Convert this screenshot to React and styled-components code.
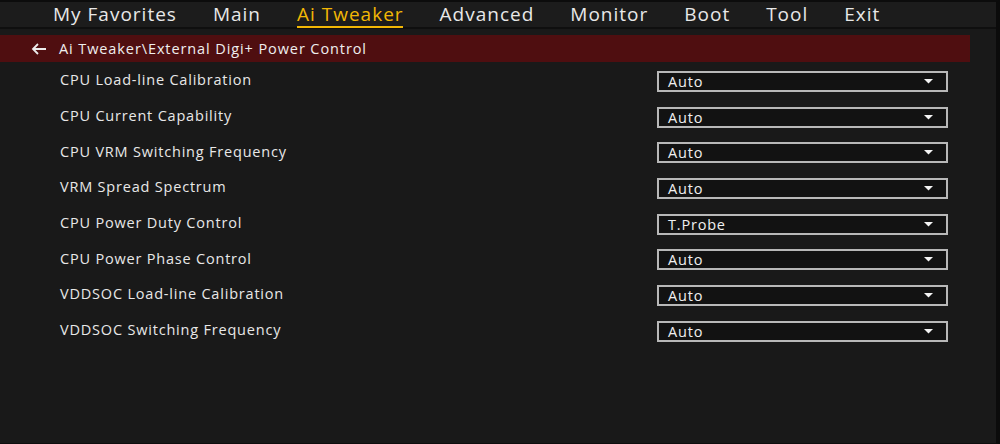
import React from 'react';
import styled, { createGlobalStyle } from 'styled-components';

const GlobalStyle = createGlobalStyle`
  html, body {
    margin: 0;
    padding: 0;
    background: #191919;
  }
  body {
    font-family: "Open Sans", "Noto Sans", "Liberation Sans", sans-serif;
  }
`;

// 画面全体
const Screen = styled.div`
  width: 1000px;
  height: 444px;
  box-sizing: border-box;
  background: #191919;
  border-top: 2px solid #0c0c0c;
  border-right: 4px solid #0b0b0b;
  border-bottom: 1px solid #0e0e0e;
  display: flex;
  flex-direction: column;
  overflow: hidden;
`;

// 上部のメニュー
const NavBar = styled.nav`
  height: 25px;
  flex-shrink: 0;
  display: flex;
  align-items: center;
  gap: 36px;
  padding-left: 53px;
  background: #1c1c1c;
  border-bottom: 2px solid #0f0f0f;
`;

const NavItem = styled.span`
  position: relative;
  font-size: 19px;
  line-height: 25px;
  color: ${(p) => (p.$active ? '#f2b705' : '#e8e8e8')};
  letter-spacing: 1px;

  &::after {
    content: '';
    display: ${(p) => (p.$active ? 'block' : 'none')};
    position: absolute;
    left: 0;
    right: 1px;
    bottom: -1px;
    height: 2px;
    background: #f2b705;
  }
`;

const Breadcrumb = styled.div`
  height: 27px;
  margin: 6px 26px 0 0;
  flex-shrink: 0;
  display: flex;
  align-items: center;
  gap: 12px;
  padding-left: 31px;
  background: #4f0e10;
  color: #efefef;
  font-size: 14.5px;
  letter-spacing: 0.9px;
`;

const BackArrow = styled.svg`
  width: 16px;
  height: 12px;
  flex-shrink: 0;
`;

const List = styled.div`
  display: flex;
  flex-direction: column;
  padding-top: 1px;
`;

// 設定項目の1行
const Row = styled.div`
  height: 35.7px;
  display: grid;
  grid-template-columns: 1fr 291px;
  align-items: center;
  padding: 0 48px 0 60px;
`;

const Label = styled.span`
  color: #e8e8e8;
  font-size: 14.5px;
  letter-spacing: 0.8px;
  margin-top: -2px;
`;

const Select = styled.div`
  height: 21px;
  box-sizing: border-box;
  display: flex;
  align-items: center;
  justify-content: space-between;
  padding: 0 13px 0 9px;
  background: #121212;
  border: 2px solid #b8b8b8;
  color: #f0f0f0;
  font-size: 14.5px;
  letter-spacing: 0.8px;
  margin-top: 1px;
`;

const Caret = styled.svg`
  width: 9px;
  height: 5px;
`;

const settings = [
  { name: 'CPU Load-line Calibration', value: 'Auto' },
  { name: 'CPU Current Capability', value: 'Auto' },
  { name: 'CPU VRM Switching Frequency', value: 'Auto' },
  { name: 'VRM Spread Spectrum', value: 'Auto' },
  { name: 'CPU Power Duty Control', value: 'T.Probe' },
  { name: 'CPU Power Phase Control', value: 'Auto' },
  { name: 'VDDSOC Load-line Calibration', value: 'Auto' },
  { name: 'VDDSOC Switching Frequency', value: 'Auto' },
];

const tabs = ['My Favorites', 'Main', 'Ai Tweaker', 'Advanced', 'Monitor', 'Boot', 'Tool', 'Exit'];

export default function App() {
  return (
    <>
      <GlobalStyle />
      <Screen>
        <NavBar>
          {tabs.map((t) => (
            <NavItem key={t} $active={t === 'Ai Tweaker'}>{t}</NavItem>
          ))}
        </NavBar>
        <Breadcrumb>
          <BackArrow viewBox="0 0 16 12">
            <path d="M15 6H2M7 1L2 6l5 5" fill="none" stroke="#ececec" strokeWidth="1.8" />
          </BackArrow>
          <span>Ai Tweaker\External Digi+ Power Control</span>
        </Breadcrumb>
        <List>
          {settings.map((s) => (
            <Row key={s.name}>
              <Label>{s.name}</Label>
              <Select>
                <span>{s.value}</span>
                <Caret viewBox="0 0 9 5">
                  <path d="M0 0h9L4.5 4.5z" fill="#f4f4f4" />
                </Caret>
              </Select>
            </Row>
          ))}
        </List>
      </Screen>
    </>
  );
}
